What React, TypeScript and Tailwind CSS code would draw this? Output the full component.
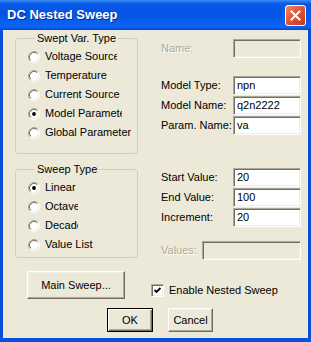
import React from "react";

const sunken =
  "border border-t-[#aca899] border-l-[#aca899] border-b-white border-r-white shadow-[inset_1px_1px_0_#716f64,inset_-1px_-1px_0_#f1efe2]";

const Radio = ({ label, checked, clip }: { label: string; checked?: boolean; clip?: string }) => (
  <div className="flex items-center h-[19px]">
    <svg width="12" height="12" viewBox="0 0 12 12" className="shrink-0">
      <circle cx="6" cy="6" r="4.5" fill="#fff" />
      <path d="M2.11 9.89 A5.5 5.5 0 0 1 9.89 2.11" fill="none" stroke="#aca899" />
      <path d="M2.82 9.18 A4.5 4.5 0 0 1 9.18 2.82" fill="none" stroke="#716f64" />
      <path d="M9.89 2.11 A5.5 5.5 0 0 1 2.11 9.89" fill="none" stroke="#ffffff" />
      <path d="M9.18 2.82 A4.5 4.5 0 0 1 2.82 9.18" fill="none" stroke="#f1efe2" />
      {checked && <circle cx="6" cy="6" r="1.9" fill="#000" />}
    </svg>
    <span className={`ml-[5px] whitespace-nowrap overflow-hidden ${clip ?? ""}`}>{label}</span>
  </div>
);

const Field = ({ label, value, disabled }: { label: string; value?: string; disabled?: boolean }) => (
  <div className="flex items-center h-[19px]">
    <span
      className={
        disabled
          ? "w-[72px] text-[#aca899] [text-shadow:1px_1px_0_#fff]"
          : "w-[72px]"
      }
    >
      {label}
    </span>
    <div
      className={`flex-1 h-[19px] flex items-center px-[3px] ${sunken} ${
        disabled ? "bg-[#ece9d8]" : "bg-white"
      }`}
    >
      {value}
    </div>
  </div>
);

const Group = ({ title, h, children }: { title: string; h: string; children: React.ReactNode }) => (
  <fieldset className={`border border-[#d0d0bf] rounded-[3px] pl-[12px] pt-[2px] ${h}`}>
    <legend className="ml-[7px] px-[2px] leading-[14px]">{title}</legend>
    {children}
  </fieldset>
);

const btn =
  "flex items-center justify-center bg-[#ece9d8] border border-t-white border-l-white border-r-[#716f64] border-b-[#716f64] shadow-[inset_-1px_-1px_0_#aca899,inset_1px_1px_0_#f1efe2]";

export default function App() {
  return (
    <div className="w-[311px] h-[342px] flex flex-col font-['Liberation_Sans',Arial,sans-serif] text-[11px] text-black select-none">
      <div className="h-[30px] shrink-0 flex items-center justify-between pl-[7px] pr-[5px] bg-[linear-gradient(180deg,#3d8cf5_0%,#0a5ae8_12%,#0254e4_45%,#0a63f2_85%,#0a5ff0_92%,#0044d4_100%)]">
        <span className="text-white font-bold text-[13px] [text-shadow:1px_1px_0_#0a2a8a]">
          DC Nested Sweep
        </span>
        <div className="w-[21px] h-[21px] rounded-[3px] border border-white bg-[linear-gradient(135deg,#f08a6a_0%,#e2553a_45%,#c43a1c_100%)] flex items-center justify-center">
          <svg width="11" height="11" viewBox="0 0 11 11">
            <path d="M1.5 1.5 L9.5 9.5 M9.5 1.5 L1.5 9.5" stroke="#fff" strokeWidth="2" strokeLinecap="square" />
          </svg>
        </div>
      </div>

      <div className="flex-1 flex bg-[#0850dc] px-[3px] pb-[4px]">
        <div className="flex-1 flex flex-col bg-[#ece9d8]">
          <div className="flex h-[230px]">
            <div className="ml-[12px] w-[123px] flex flex-col pt-[1px] gap-[8px]">
              <Group title="Swept Var. Type" h="h-[123px]">
                <Radio label="Voltage Source" clip="w-[72px]" />
                <Radio label="Temperature" />
                <Radio label="Current Source" />
                <Radio label="Model Parameter" checked clip="w-[77px]" />
                <Radio label="Global Parameter" />
              </Group>
              <Group title="Sweep Type" h="h-[96px]">
                <Radio label="Linear" checked />
                <Radio label="Octave" clip="w-[33px]" />
                <Radio label="Decade" clip="w-[33px]" />
                <Radio label="Value List" />
              </Group>
            </div>

            <div className="ml-[23px] mr-[7px] flex-1 flex flex-col pt-[9px]">
              <Field label="Name:" disabled />
              <div className="mt-[18px] flex flex-col gap-[1px]">
                <Field label="Model Type:" value="npn" />
                <Field label="Model Name:" value="q2n2222" />
                <Field label="Param. Name:" value="va" />
              </div>
              <div className="mt-[33px] flex flex-col gap-[1px]">
                <Field label="Start Value:" value="20" />
                <Field label="End Value:" value="100" />
                <Field label="Increment:" value="20" />
              </div>
              <div className="mt-[14px] flex items-center h-[19px]">
                <span className="w-[41px] text-[#aca899] [text-shadow:1px_1px_0_#fff]">Values:</span>
                <div className={`flex-1 h-[19px] bg-[#ece9d8] ${sunken}`} />
              </div>
            </div>
          </div>

          <div className="mt-[11px] flex items-start pl-[24px]">
            <div className={`${btn} w-[98px] h-[28px]`}>Main Sweep...</div>
            <div className="ml-[26px] mt-[11px] flex items-center">
              <div className={`w-[13px] h-[13px] bg-white flex items-center justify-center ${sunken}`}>
                <svg width="9" height="9" viewBox="0 0 9 9">
                  <path d="M1.5 4 L3.5 6 L7.5 2" fill="none" stroke="#000" strokeWidth="1.8" />
                </svg>
              </div>
              <span className="ml-[5px]">Enable Nested Sweep</span>
            </div>
          </div>

          <div className="mt-[9px] flex pl-[104px] gap-[15px]">
            <div className="w-[46px] h-[24px] flex items-center justify-center bg-[#ece9d8] border border-black shadow-[inset_1px_1px_0_#fff,inset_-1px_-1px_0_#716f64,inset_-2px_-2px_0_#aca899]">
              OK
            </div>
            <div className={`${btn} w-[45px] h-[24px]`}>Cancel</div>
          </div>
        </div>
      </div>
    </div>
  );
}
